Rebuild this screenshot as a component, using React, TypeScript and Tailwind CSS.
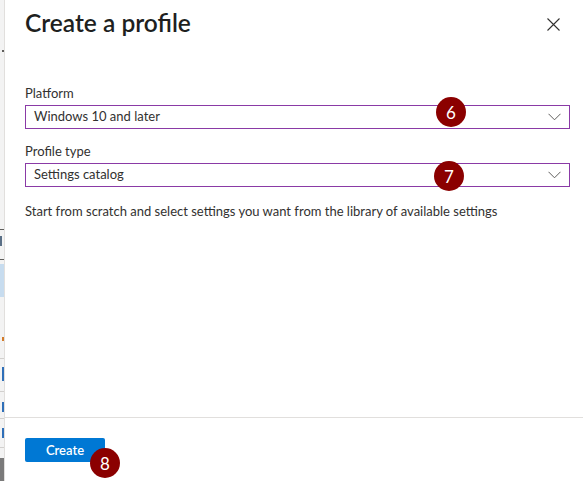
import { ReactNode } from 'react';

const font = { fontFamily: 'Lato, "Noto Sans", Arial, sans-serif' };

function Badge({ n, className }: { n: number; className: string }) {
  return (
    <span
      className={`absolute w-[30px] h-[30px] rounded-full bg-[#8b0000] text-white text-[17px] flex items-center justify-center leading-none ${className}`}
    >
      {n}
    </span>
  );
}

function Chevron() {
  return (
    <svg width="13" height="8" viewBox="0 0 13 8" className="shrink-0">
      <path d="M0.5 0.8 L6.5 6.8 L12.5 0.8" fill="none" stroke="#605e5c" strokeWidth="1" />
    </svg>
  );
}

function Dropdown({ value, children }: { value: string; children?: ReactNode }) {
  return (
    <div className="relative h-[24px] border border-[#8a3aa6] flex items-center justify-between pl-[8px] pr-[8px]">
      <span className="text-[13px] text-[#323130]">{value}</span>
      <Chevron />
      {children}
    </div>
  );
}

// the page that sits behind the blade, mostly hidden
function BackdropStrip() {
  return (
    <div className="w-[5px] shrink-0 h-full bg-[#f3f3f3] border-r border-[#e1dfdd] overflow-hidden flex flex-col">
      <div className="h-[50px]" />
      <div className="h-[2px] w-[2px] bg-[#605e5c] ml-[2px]" />
      <div className="h-[177px]" />
      <div className="h-px bg-[#605e5c]" />
      <div className="h-[10px] w-[2px] mt-[6px] bg-[#5a6f86]" />
      <div className="h-[13px]" />
      <div className="h-px bg-[#605e5c]" />
      <div className="h-[4px]" />
      <div className="h-[33px] bg-[#c7dcef]" />
      <div className="h-[40px]" />
      <div className="h-[4px] bg-[#d47b2a] w-[3px] ml-[2px]" />
      <div className="h-[17px]" />
      <div className="h-px bg-[#d2d0ce]" />
      <div className="h-[14px] w-[3px] mt-[8px] bg-[#2f6fb8] ml-[2px]" />
      <div className="h-[10px]" />
      <div className="h-px bg-[#d2d0ce]" />
      <div className="h-[10px] w-[3px] mt-[10px] bg-[#2f6fb8] ml-[2px]" />
      <div className="h-[6px]" />
      <div className="h-px bg-[#d2d0ce]" />
      <div className="h-[10px] w-[3px] mt-[9px] bg-[#2f6fb8] ml-[2px]" />
      <div className="h-[9px]" />
      <div className="h-px bg-[#d2d0ce]" />
      <div className="h-[10px]" />
      <div className="flex-1 bg-[#7a7a7a]" />
    </div>
  );
}

export default function App() {
  return (
    <div className="w-[583px] h-[481px] flex bg-white overflow-hidden" style={font}>
      <BackdropStrip />
      <div className="flex-1 flex flex-col h-full">
        <div className="flex-1 pl-[20px] pr-[13px]">
          <div className="flex items-start justify-between pt-[7px]">
            <h1 className="text-[24.5px] leading-[32px] font-semibold text-[#201f1e]">Create a profile</h1>
            <svg width="13" height="13" viewBox="0 0 13 13" className="mt-[11px] mr-[10px]">
              <path d="M0.5 0.5 L12.5 12.5 M12.5 0.5 L0.5 12.5" fill="none" stroke="#323130" strokeWidth="1.1" />
            </svg>
          </div>

          <div className="mt-[46px] flex flex-col">
            <label className="block h-[20px] text-[13px] leading-[16px] text-[#323130]">Platform</label>
            <Dropdown value="Windows 10 and later">
              <Badge n={6} className="left-[410px] top-[-9px]" />
            </Dropdown>

            <label className="block h-[20px] mt-[14px] text-[13px] leading-[16px] text-[#323130]">Profile type</label>
            <Dropdown value="Settings catalog">
              <Badge n={7} className="left-[408px] top-[-3px]" />
            </Dropdown>

            <p className="mt-[16px] text-[13px] leading-[16px] text-[#323130]">
              Start from scratch and select settings you want from the library of available settings
            </p>
          </div>
        </div>

        <div className="h-[64px] shrink-0 border-t border-[#e1dfdd] pl-[20px] pt-[20px]">
          <div className="relative w-[80px]">
            <button className="block w-[80px] h-[24px] rounded-[2px] bg-[#0078d4] text-white text-[13px] font-semibold leading-none">
              Create
            </button>
            <Badge n={8} className="left-[65px] top-[10px]" />
          </div>
        </div>
      </div>
    </div>
  );
}
